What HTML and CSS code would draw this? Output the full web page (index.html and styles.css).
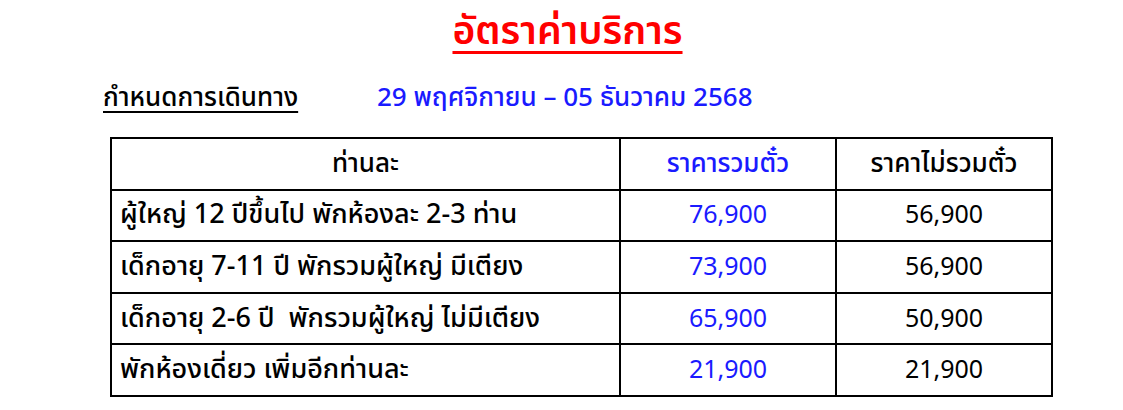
FILE: index.html
```html
<!DOCTYPE html>
<html lang="th">
<head>
<meta charset="utf-8">
<link rel="stylesheet" href="styles.css">
</head>
<body>
<div class="page">
  <h1 class="title">อัตราค่าบริการ</h1>
  <div class="trip">
    <span class="trip-label">กำหนดการเดินทาง</span>
    <span class="trip-date">29 พฤศจิกายน – 05 ธันวาคม 2568</span>
  </div>
  <table class="rates">
    <colgroup>
      <col class="c1"><col class="c2"><col class="c3">
    </colgroup>
    <tr class="head">
      <th>ท่านละ</th>
      <th class="blue">ราคารวมตั๋ว</th>
      <th>ราคาไม่รวมตั๋ว</th>
    </tr>
    <tr><td class="desc">ผู้ใหญ่ 12 ปีขึ้นไป พักห้องละ 2-3 ท่าน</td><td class="num blue">76,900</td><td class="num">56,900</td></tr>
    <tr><td class="desc">เด็กอายุ 7-11 ปี พักรวมผู้ใหญ่ มีเตียง</td><td class="num blue">73,900</td><td class="num">56,900</td></tr>
    <tr><td class="desc">เด็กอายุ 2-6 ปี&nbsp; พักรวมผู้ใหญ่ ไม่มีเตียง</td><td class="num blue">65,900</td><td class="num">50,900</td></tr>
    <tr><td class="desc">พักห้องเดี่ยว เพิ่มอีกท่านละ</td><td class="num blue">21,900</td><td class="num">21,900</td></tr>
  </table>
</div>
</body>
</html>
```
FILE: styles.css
```css
html, body {
  margin: 0;
  padding: 0;
  background: #ffffff;
}
body {
  font-family: Tahoma, "Noto Sans Thai", "Noto Sans", sans-serif;
  color: #000;
}
.page {
  width: 1123px;
  height: 410px;
  overflow: hidden;
}
.title {
  margin: 0;
  padding-top: 10px;
  padding-left: 12px;
  text-align: center;
  font-size: 39px;
  font-weight: 600;
  color: #ff0000;
  text-decoration: underline;
  text-underline-offset: 7px;
  text-decoration-thickness: 3px;
  line-height: 46px;
}
.trip {
  display: flex;
  margin-top: 26px;
  padding-left: 103px;
  font-size: 26px;
  font-weight: 500;
  line-height: 32px;
}
.trip-label {
  text-decoration: underline;
  text-underline-offset: 5px;
  text-decoration-thickness: 2px;
  width: 274px;
}
.trip-date {
  color: #1a1aff;
}
.rates {
  margin-top: 23px;
  margin-left: 110px;
  border-collapse: collapse;
  font-size: 26px;
}
.c1 { width: 509px; }
.c2 { width: 216px; }
.c3 { width: 216px; }
.rates th, .rates td {
  border: 2px solid #000;
  height: 49.6px;
  padding: 0 8px;
  line-height: 32px;
  font-weight: 500;
}
.rates th {
  text-align: center;
}
.rates td.desc {
  text-align: left;
  font-size: 27px;
}
.rates td.num {
  text-align: center;
  font-size: 25px;
  font-weight: normal;
}
.blue {
  color: #1a1aff;
}
```
